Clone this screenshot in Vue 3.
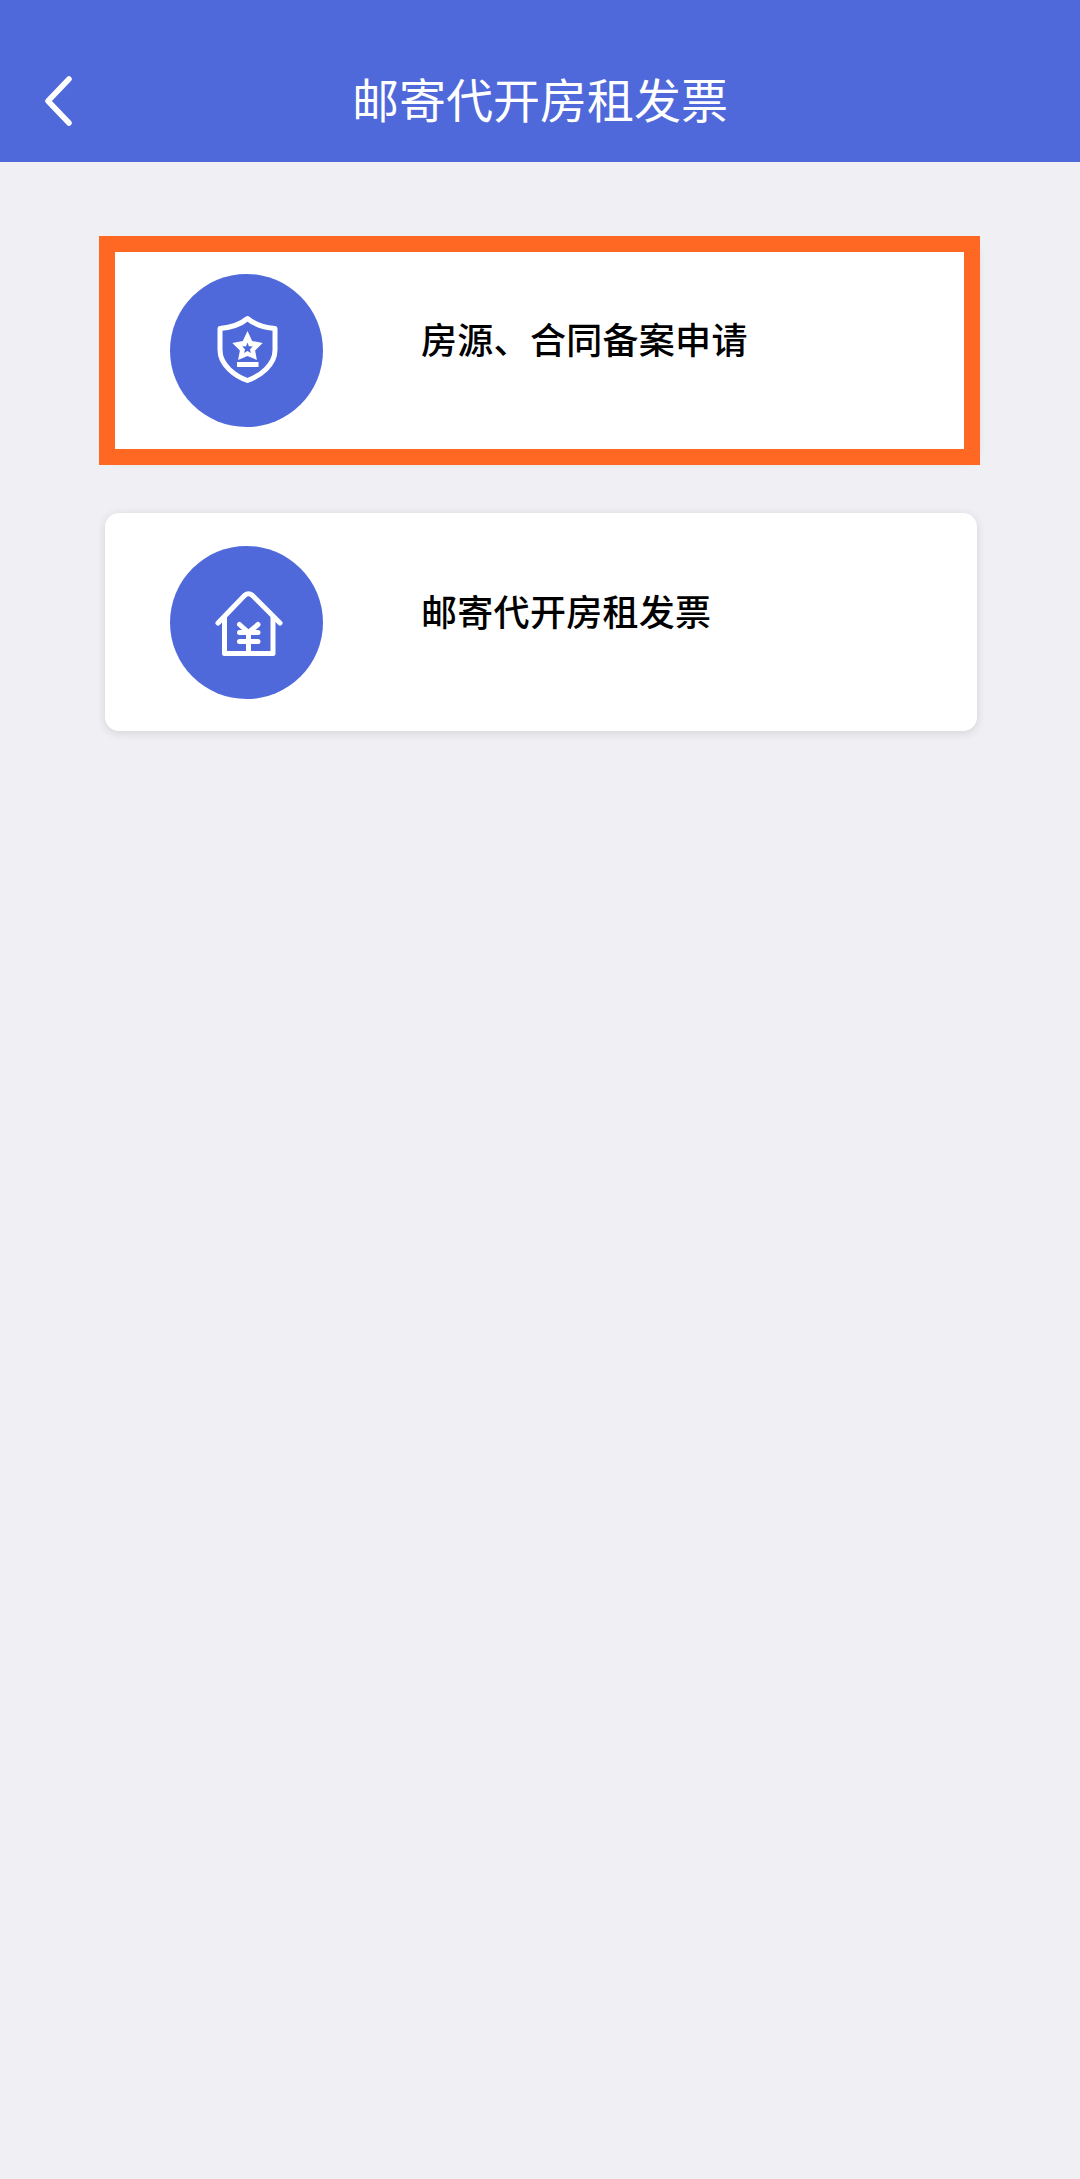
<script setup>
const title = '邮寄代开房租发票'
</script>

<template>
  <div class="page">
    <header class="nav">
      <svg class="back" width="30" height="50" viewBox="0 0 30 50">
        <path d="M26 3 L5 25 L26 47" fill="none" stroke="#fff" stroke-width="5.5" stroke-linecap="round" stroke-linejoin="round" />
      </svg>
      <h1 class="nav-title">{{ title }}</h1>
    </header>

    <main class="list">
      <div class="card">
        <div class="icon-wrap">
          <svg width="80" height="80" viewBox="0 0 80 80">
            <path d="M40.5 8.5 C47 14 57 17.5 68 18.5 V40 C68 55 53 66 40.5 70.5 C28 66 13 55 13 40 V18.5 C24 17.5 34 14 40.5 8.5 Z" fill="none" stroke="#fff" stroke-width="5" stroke-linejoin="round" />
            <polygon points="40.5,21 45.2,31 55.7,33 48.1,40.5 49.9,50 40.5,46 31.1,50 32.9,40.5 25.3,33 35.8,31" fill="#fff" />
            <polygon points="40.5,32.5 41.9,36.2 45.8,36.6 43,39.2 43.9,43 40.5,41 37.1,43 38,39.2 35.2,36.6 39.1,36.2" fill="#4f69da" />
            <rect x="30" y="52" width="21.5" height="5" fill="#fff" />
          </svg>
        </div>
        <span class="card-text">房源、合同备案申请</span>
        <div class="highlight"></div>
      </div>

      <div class="card">
        <div class="icon-wrap">
          <svg width="80" height="80" viewBox="0 0 80 80">
            <path d="M11 41 L37.5 13.5 Q41.5 10 45.5 13.5 L73 41" fill="none" stroke="#fff" stroke-width="5" stroke-linecap="round" stroke-linejoin="round" />
            <path d="M17.5 35 V71.5 H66 V35" fill="none" stroke="#fff" stroke-width="5" stroke-linejoin="round" />
            <path d="M32.5 42.5 L41.5 50.5 L51 42.5 M32.5 50.5 H51 M32.5 59.5 H51 M41.5 50.5 V71" fill="none" stroke="#fff" stroke-width="5" stroke-linecap="round" stroke-linejoin="round" />
          </svg>
        </div>
        <span class="card-text">{{ title }}</span>
      </div>
    </main>
  </div>
</template>

<style scoped>
.page {
  min-height: 100vh;
  background: #efeff4;
  font-family: "Noto Sans CJK SC", "Noto Sans", sans-serif;
}

.nav {
  height: 162px;
  background: #4f69da;
  position: relative;
  display: flex;
  align-items: flex-end;
  justify-content: center;
}

.back {
  position: absolute;
  left: 43px;
  bottom: 36px;
}

.nav-title {
  margin: 0 0 34px;
  color: #fff;
  font-size: 47px;
  line-height: 60px;
  font-weight: 400;
}

.list {
  padding: 79px 103px 0 105px;
  display: flex;
  flex-direction: column;
  gap: 54px;
}

.card {
  position: relative;
  height: 218px;
  box-sizing: border-box;
  padding-left: 65px;
  background: #fff;
  border-radius: 14px;
  box-shadow: 0 2px 10px rgba(0, 0, 0, 0.12);
  display: flex;
  align-items: center;
}

.icon-wrap {
  width: 153px;
  height: 153px;
  flex-shrink: 0;
  border-radius: 50%;
  background: #4f69da;
  display: flex;
  align-items: center;
  justify-content: center;
}

.card-text {
  margin-left: 98px;
  padding-bottom: 25px;
  color: #000;
  font-size: 36px;
  font-weight: 500;
  letter-spacing: 0.3px;
  line-height: 50px;
}

/* 标注框 */
.highlight {
  position: absolute;
  left: -6px;
  right: -3px;
  top: -5px;
  bottom: -6px;
  border: 16px solid #ff6822;
}
</style>
